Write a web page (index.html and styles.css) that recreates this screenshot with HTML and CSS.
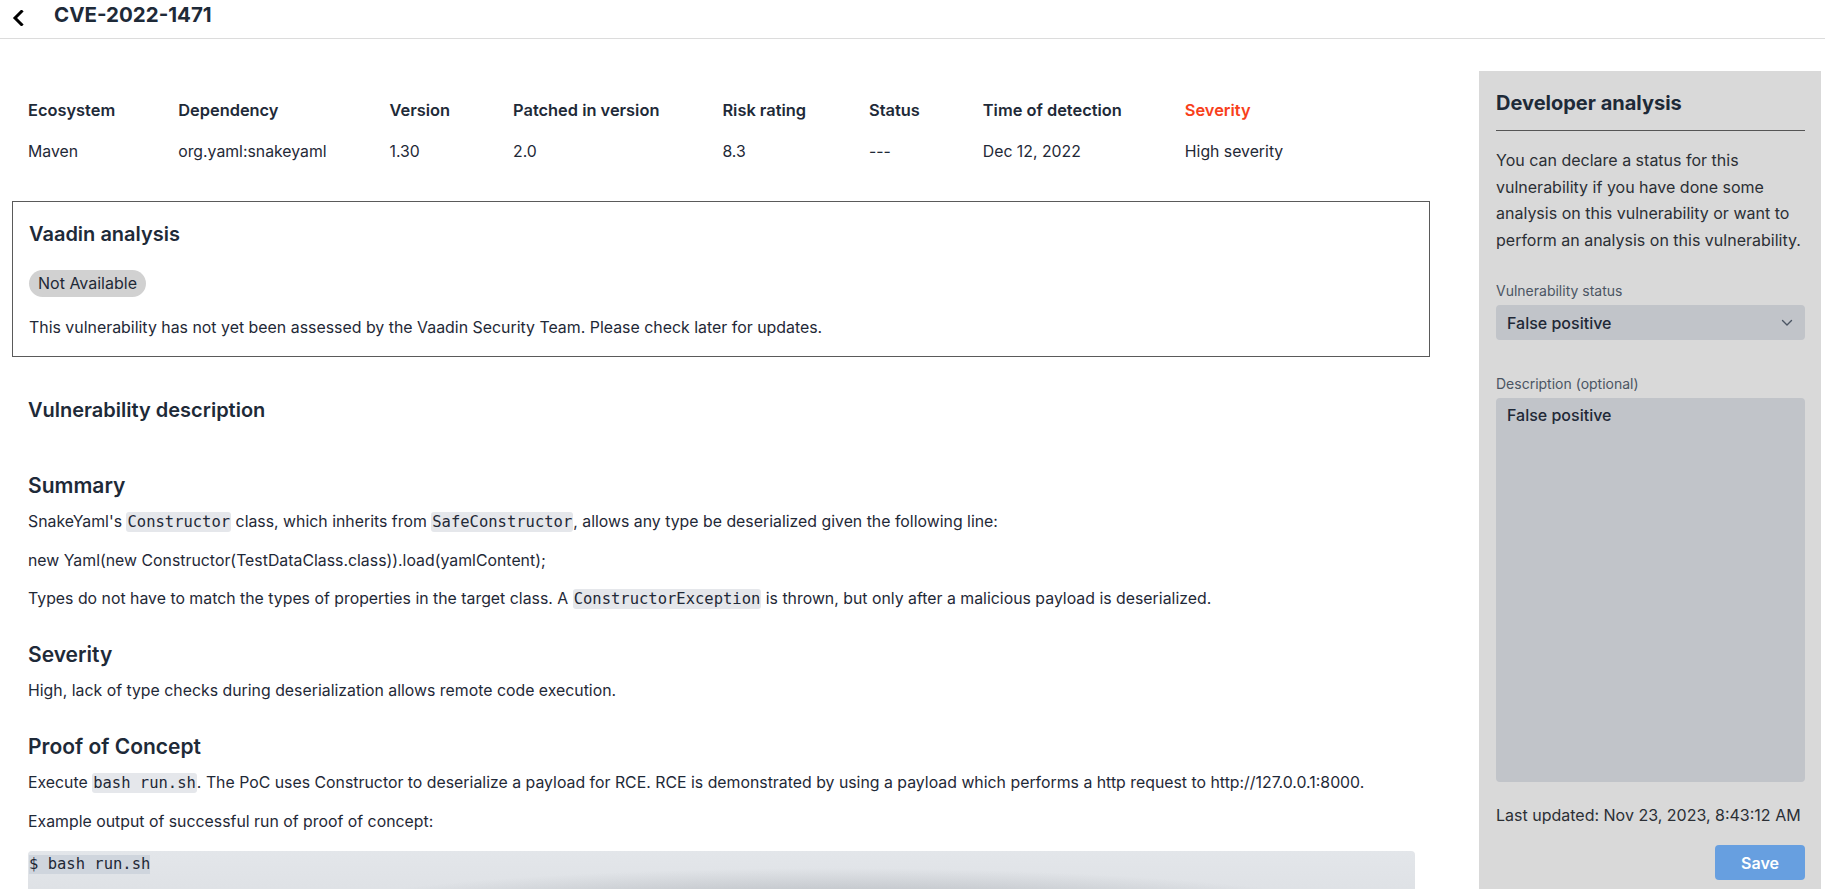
FILE: index.html
```html
<!DOCTYPE html>
<html lang="en">
<head>
<meta charset="utf-8">
<title>CVE-2022-1471</title>
<link rel="stylesheet" href="styles.css">
</head>
<body>
<header class="topbar">
  <button class="back" aria-label="Back">
    <svg width="12" height="16" viewBox="0 0 12 16"><path d="M9.5 1.5 L3 8 L9.5 14.5" fill="none" stroke="#000" stroke-width="3" stroke-linecap="square" stroke-linejoin="miter"/></svg>
  </button>
  <h1 class="title">CVE-2022-1471</h1>
</header>
<div class="layout">
  <main class="main">
    <div class="facts">
      <div class="fact"><div class="fact-h">Ecosystem</div><div class="fact-v">Maven</div></div>
      <div class="fact"><div class="fact-h">Dependency</div><div class="fact-v">org.yaml:snakeyaml</div></div>
      <div class="fact"><div class="fact-h">Version</div><div class="fact-v">1.30</div></div>
      <div class="fact"><div class="fact-h">Patched in version</div><div class="fact-v">2.0</div></div>
      <div class="fact"><div class="fact-h">Risk rating</div><div class="fact-v">8.3</div></div>
      <div class="fact"><div class="fact-h">Status</div><div class="fact-v">---</div></div>
      <div class="fact"><div class="fact-h">Time of detection</div><div class="fact-v">Dec 12, 2022</div></div>
      <div class="fact"><div class="fact-h severity">Severity</div><div class="fact-v">High severity</div></div>
    </div>
    <section class="vaadin">
      <h2 class="sub">Vaadin analysis</h2>
      <span class="badge">Not Available</span>
      <p class="vtext">This vulnerability has not yet been assessed by the Vaadin Security Team. Please check later for updates.</p>
    </section>
    <h2 class="sub desc-title">Vulnerability description</h2>
    <article class="md">
      <h3>Summary</h3>
      <p>SnakeYaml's <code>Constructor</code> class, which inherits from <code>SafeConstructor</code>, allows any type be deserialized given the following line:</p>
      <p>new Yaml(new Constructor(TestDataClass.class)).load(yamlContent);</p>
      <p>Types do not have to match the types of properties in the target class. A <code>ConstructorException</code> is thrown, but only after a malicious payload is deserialized.</p>
      <h3>Severity</h3>
      <p>High, lack of type checks during deserialization allows remote code execution.</p>
      <h3>Proof of Concept</h3>
      <p>Execute <code>bash run.sh</code>. The PoC uses Constructor to deserialize a payload for RCE. RCE is demonstrated by using a payload which performs a http request to http://127.0.0.1:8000.</p>
      <p>Example output of successful run of proof of concept:</p>
      <pre class="codeblock"><code>$ bash run.sh</code></pre>
    </article>
  </main>
  <aside class="panel">
    <h2 class="panel-title">Developer analysis</h2>
    <p class="panel-text">You can declare a status for this vulnerability if you have done some analysis on this vulnerability or want to perform an analysis on this vulnerability.</p>
    <label class="field-label">Vulnerability status</label>
    <div class="select">
      <span>False positive</span>
      <svg width="12" height="8" viewBox="0 0 12 8"><path d="M1.5 1.5 L6 6 L10.5 1.5" fill="none" stroke="#4b5563" stroke-width="1.4" stroke-linecap="round" stroke-linejoin="round"/></svg>
    </div>
    <label class="field-label desc-label">Description (optional)</label>
    <div class="textarea">False positive</div>
    <p class="updated">Last updated: Nov 23, 2023, 8:43:12 AM</p>
    <div class="actions"><button class="save">Save</button></div>
  </aside>
</div>
</body>
</html>
```
FILE: styles.css
```css
* { box-sizing: border-box; }
html, body { margin: 0; padding: 0; }
body {
  font-family: Inter, "Noto Sans", sans-serif;
  color: #1f2937;
  background: #fff;
  font-size: 16px;
  overflow: hidden;
}
.topbar {
  height: 39px;
  border-bottom: 1px solid #dcdcdc;
  display: flex;
  align-items: center;
  padding-left: 11px;
}
.back {
  border: 0;
  background: none;
  padding: 0;
  width: 14px;
  height: 16px;
  display: flex;
  align-items: center;
  justify-content: center;
  margin-top: -2px;
}
.title {
  margin: -8px 0 0 29px;
  font-size: 20.5px;
  font-weight: 700;
  color: #1e2a38;
  line-height: 24px;
}
.layout {
  display: flex;
  gap: 49px;
  padding: 0 4px 0 12px;
}
.main {
  flex: 1;
  min-width: 0;
  padding-top: 59px;
}
.facts {
  display: flex;
  padding-left: 16px;
  gap: 63px;
}
.fact-h {
  font-weight: 600;
  line-height: 24px;
  color: #1e2a38;
  font-size: 16.4px;
}
.fact-h.severity { color: #f8401b; }
.fact-v {
  margin-top: 18px;
  line-height: 24px;
  font-size: 15.8px;
}
.vaadin {
  margin-top: 37px;
  border: 1px solid #5a5a5a;
  padding: 19px 16px 16px;
}
.sub {
  margin: 0;
  font-size: 20px;
  font-weight: 600;
  line-height: 26px;
  color: #1e2a38;
}
.badge {
  display: inline-block;
  margin-top: 23px;
  background: #d1d1d1;
  border-radius: 14px;
  height: 27px;
  line-height: 27px;
  padding: 0 9px;
  font-size: 16px;
  color: #1f2937;
}
.vtext {
  margin: 19px 0 0;
  line-height: 24px;
  font-size: 15.9px;
}
.desc-title {
  margin-top: 40px;
  padding-left: 16px;
}
.md {
  padding-left: 16px;
  padding-right: 15px;
}
.md h3 {
  margin: 30px 0 0;
  font-size: 21px;
  font-weight: 600;
  line-height: 28px;
  color: #1e2a38;
}
.md h3:first-child { margin-top: 49px; }
.md p {
  margin: 14.5px 0 0;
  line-height: 24px;
  font-size: 15.85px;
}
.md h3 + p { margin-top: 10px; }
.md code {
  font-family: "DejaVu Sans Mono", "Liberation Mono", monospace;
  font-size: 15.5px;
  background: #e5e7eb;
  border-radius: 3px;
  padding: 1px 1px;
}
.md .codeblock {
  margin: 17px 0 0;
  padding: 3px 0 40px 1px;
  border-radius: 4px;
  background:
    radial-gradient(ellipse 560px 55px at 58% 72px, rgba(110,116,124,0.55), rgba(110,116,124,0) 100%),
    linear-gradient(#e3e6ea, #dcdfe3);
}
.md .codeblock code {
  background: #cfd5dd;
  border-radius: 0;
  padding: 0;
  line-height: 19px;
  display: inline-block;
}
.panel {
  width: 342px;
  flex: none;
  margin-top: 32px;
  background: #d9d9d9;
  padding: 20px 16px 40px 17px;
  min-height: 860px;
}
.panel-title {
  margin: 0;
  font-size: 20px;
  font-weight: 700;
  line-height: 24px;
  color: #1e2a38;
  padding-bottom: 15px;
  border-bottom: 1px solid #555;
}
.panel-text {
  margin: 16px 0 0;
  line-height: 26.5px;
  font-size: 16px;
  color: #2b2f35;
}
.field-label {
  display: block;
  margin-top: 28px;
  font-size: 14px;
  line-height: 20px;
  color: #4b5563;
}
.select {
  margin-top: 4px;
  height: 35px;
  background: #c1c4c9;
  border-radius: 4px;
  display: flex;
  align-items: center;
  justify-content: space-between;
  padding: 0 12px 0 11px;
  font-weight: 500;
  font-size: 16px;
  color: #1f2937;
}
.desc-label { margin-top: 34px; }
.textarea {
  margin-top: 4px;
  height: 384px;
  background: #c1c4c9;
  border-radius: 4px;
  padding: 5px 11px;
  font-weight: 500;
  font-size: 16px;
  line-height: 24px;
  color: #1f2937;
}
.updated {
  margin: 21px 0 0;
  line-height: 24px;
  font-size: 16px;
  color: #2b2f35;
}
.actions {
  display: flex;
  justify-content: flex-end;
  margin-top: 18px;
}
.save {
  width: 90px;
  height: 35px;
  border: 0;
  border-radius: 4px;
  background: #679fe0;
  color: #fff;
  font-family: Inter, sans-serif;
  font-weight: 600;
  font-size: 16px;
}
```
